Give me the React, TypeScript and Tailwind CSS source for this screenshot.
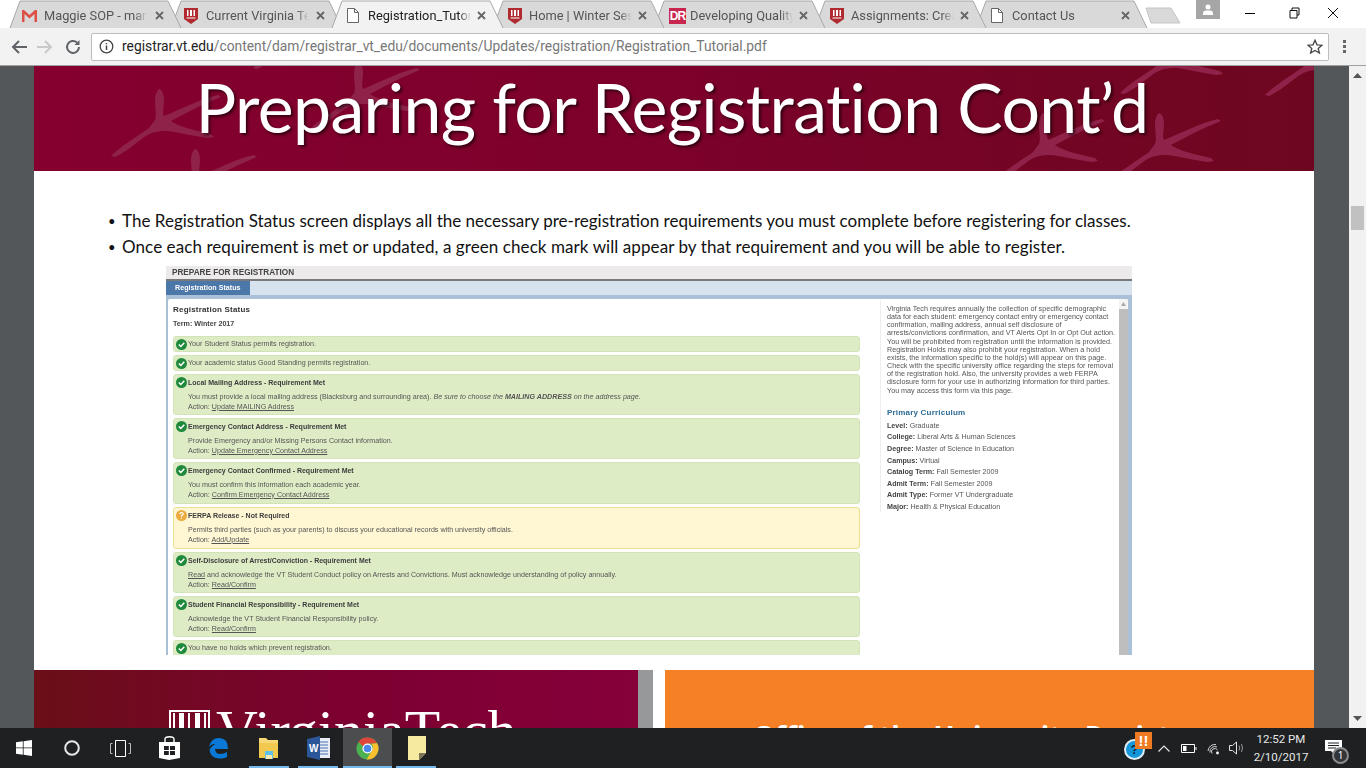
import React from "react";

const Shield = () => (
  <svg width="14" height="16" viewBox="0 0 14 16" className="shrink-0">
    <path d="M0 0H14V11L7 16L0 11Z" fill="#b02a2f" />
    <path d="M3 2V8H4.500V2ZM6 2V8H8V2ZM9.500 2V8H11V2ZM2.500 9.500H11.500V10.500H2.500Z" fill="#fff" />
  </svg>
);
const Doc = () => (
  <svg width="12" height="15" viewBox="0 0 12 15" className="shrink-0" fill="#fff" stroke="#666" strokeWidth="1">
    <path d="M.5.5H7.500L11.500 4.500V14.500H.5Z" />
    <path d="M7.500.5V4.500H11.500" fill="none" />
  </svg>
);
const Gmail = () => (
  <svg width="15" height="12" viewBox="0 0 15 12" className="shrink-0">
    <path d="M0 0H2L7.500 5L13 0H15V12H12.500V4L7.500 8.500L2.500 4V12H0Z" fill="#dd5044" />
  </svg>
);
const DR = () => (
  <div className="w-[17px] h-[16px] shrink-0 bg-[#c8254f] text-white text-[12px] font-bold leading-[16px] overflow-hidden text-center font-['Liberation_Sans',sans-serif] tracking-[-1px]">DR</div>
);

const tabs: { t: string; i: React.ReactNode; active?: boolean; gap: number; pl: number }[] = [
  { t: "Maggie SOP - marj", i: <Gmail />, gap: 7, pl: 13 },
  { t: "Current Virginia Tec", i: <Shield />, gap: 8, pl: 14 },
  { t: "Registration_Tutori", i: <Doc />, active: true, gap: 9, pl: 16 },
  { t: "Home | Winter Sess", i: <Shield />, gap: 7, pl: 16 },
  { t: "Developing Quality", i: <DR />, gap: 4, pl: 16 },
  { t: "Assignments: Creat", i: <Shield />, gap: 7, pl: 16 },
  { t: "Contact Us", i: <Doc />, gap: 9, pl: 16 },
];

function Tab({ t, i, active, gap, pl, z }: { t: string; i: React.ReactNode; active?: boolean; gap: number; pl: number; z: number }) {
  return (
    <div className="relative w-[173px] h-[28px] -mr-[12px] shrink-0" style={{ zIndex: z }}>
      <svg width="173" height="28" viewBox="0 0 173 28" className="absolute left-0 top-0">
        <path d="M1 28L11 1H159L172 28" fill={active ? "#f2f2f2" : "#d9d9d9"} stroke="#a8a8a8" strokeWidth="1" />
      </svg>
      <div className="relative flex items-center h-[28px] pr-[16px] pt-[3px]" style={{ paddingLeft: pl }}>
        {i}
        <span
          className={`w-[103px] overflow-hidden whitespace-nowrap text-[12.800px] font-['Roboto',sans-serif] ${active ? "text-[#222]" : "text-[#555]"}`}
          style={{ marginLeft: gap, maskImage: "linear-gradient(to right,#000 88%,transparent)" }}
        >
          {t}
        </span>
        <span className="ml-auto mr-[2px] text-[#666]">
          <svg width="9" height="9" viewBox="0 0 9 9"><path d="M1 1L8 8M8 1L1 8" stroke="#666" strokeWidth="1.800" /></svg>
        </span>
      </div>
    </div>
  );
}

function TopChrome() {
  return (
    <div className="shrink-0">
      <div className="h-[28px] bg-white flex relative pl-[9px]">
        {tabs.map((x, n) => (
          <Tab key={x.t} {...x} z={x.active ? 20 : 10 - n} />
        ))}
        <svg width="36" height="18" viewBox="0 0 36 18" className="mt-[7px] ml-[9px] shrink-0">
          <path d="M1 1H26L35 16H6Z" fill="#d9d9d9" stroke="#c4c4c4" />
        </svg>
        <div className="ml-[15px] w-[24px] h-[19px] bg-[#a6a6a6] flex items-center justify-center shrink-0">
          <svg width="10" height="11" viewBox="0 0 10 11"><circle cx="5" cy="3" r="2.500" fill="#fff" /><path d="M0 11V9Q0 7 3 6.500H7Q10 7 10 9V11Z" fill="#fff" /></svg>
        </div>
        <div className="w-[30px] h-[14px] ml-[15px] mt-[6px] flex items-center justify-center shrink-0">
          <div className="w-[10px] h-[1px] bg-black" />
        </div>
        <div className="w-[16px] ml-[24px] mt-[7px] shrink-0">
          <svg width="11" height="12" viewBox="0 0 11 12" fill="none" stroke="#111"><path d="M3 3V1H10V8H8" /><path d="M1 3.500H8V11H1Z" /></svg>
        </div>
        <div className="w-[16px] ml-[22px] mt-[7px] shrink-0">
          <svg width="12" height="12" viewBox="0 0 12 12"><path d="M1 1L11 11M11 1L1 11" stroke="#111" /></svg>
        </div>
      </div>
      <div className="h-[38px] bg-[#f2f2f2] border-b border-[#a0a0a0] flex items-center pl-[11px] pr-[8px]">
        <svg width="16" height="14" viewBox="0 0 16 14" fill="none" stroke="#5f6368" strokeWidth="2"><path d="M16 7H2M8 1L2 7L8 13" /></svg>
        <svg width="16" height="14" viewBox="0 0 16 14" fill="none" stroke="#c9c9c9" strokeWidth="2" className="ml-[10px]"><path d="M0 7H14M8 1L14 7L8 13" /></svg>
        <svg width="16" height="16" viewBox="0 0 16 16" fill="none" stroke="#5f6368" strokeWidth="2" className="ml-[12px]"><path d="M14 8A6 6 0 1 1 12 3.500" /><path d="M14.500 1V6H9.500Z" fill="#5f6368" stroke="none" /></svg>
        <div className="ml-[10px] w-[1238px] h-[28px] bg-white border border-[#bdbdbd] rounded-[2px] flex items-center pl-[7px] pr-[5px]">
          <svg width="15" height="15" viewBox="0 0 15 15" fill="none" stroke="#444" strokeWidth="1.300" className="shrink-0"><circle cx="7.500" cy="7.500" r="6.300" /><path d="M7.500 6.500V11M7.500 4V5.200" strokeWidth="1.500" /></svg>
          <span className="ml-[8px] text-[13.830px] font-['Roboto',sans-serif] whitespace-nowrap text-[#777]">
            <span className="text-[#222]">registrar.vt.edu</span>/content/dam/registrar_vt_edu/documents/Updates/registration/Registration_Tutorial.pdf
          </span>
          <svg width="16" height="15" viewBox="0 0 16 15" fill="none" stroke="#444" strokeWidth="1.300" className="ml-auto"><path d="M8 1.200L10 5.800L15 6.200L11.200 9.500L12.400 14L8 11.500L3.600 14L4.800 9.500L1 6.200L6 5.800Z" /></svg>
        </div>
        <div className="ml-[14px] flex flex-col gap-[2px]">
          <i className="block w-[3px] h-[3px] bg-[#666]" /><i className="block w-[3px] h-[3px] bg-[#666]" /><i className="block w-[3px] h-[3px] bg-[#666]" />
        </div>
      </div>
    </div>
  );
}

const Foot = ({ x, y }: { x: number; y: number }) => (
  <path
    transform={`translate(${x} ${y})`}
    fill="#8e2249"
    d="M-8 -4C-6 -10 -8 -14 -8 -24C-8 -30 -5 -35 -4 -35C-1 -35 1 -30 1 -24C1 -16 -1 -12 1 -8C20 -16 40 -26 55 -29L58 -27C40 -20 25 -12 8 -3C14 2 30 6 48 10L51 13L45 14C30 12 15 8 4 7C-6 7 -12 8 -20 14C-28 20 -40 30 -48 33L-52 32C-42 22 -25 12 -14 4Z"
  />
);

function Header() {
  return (
    <div className="relative h-[105px] overflow-hidden bg-gradient-to-r from-[#85002f] via-[#7c012b] to-[#6d071f] flex justify-center">
      <svg width="1280" height="105" viewBox="0 0 1280 105" className="absolute left-0 top-0">
        <Foot x={129} y={58} />
        <Foot x={271} y={-30} />
        <Foot x={328} y={31} />
        <Foot x={165} y={118} />
        <Foot x={1013} y={82} />
        <Foot x={1129} y={82} />
        <Foot x={1138} y={-5} />
        <Foot x={1283} y={-3} />
      </svg>
      <h1 className="relative mt-[1px] mr-[4px] text-white text-[68px] leading-[80px] tracking-[-0.64px] [font-variant-ligatures:none] font-normal font-['Lato',sans-serif] whitespace-nowrap [text-shadow:2px_2px_3px_rgba(0,0,0,0.6)]">
        Preparing for Registration Cont’d
      </h1>
    </div>
  );
}

const Check = () => (
  <svg width="11" height="11" viewBox="0 0 11 11" className="shrink-0">
    <circle cx="5.500" cy="5.500" r="5.500" fill="#1f8a3b" />
    <path d="M2.800 5.500L4.800 7.500L8.300 3.700" fill="none" stroke="#fff" strokeWidth="1.500" />
  </svg>
);
const Q = () => (
  <svg width="11" height="11" viewBox="0 0 11 11" className="shrink-0">
    <circle cx="5.500" cy="5.500" r="5.500" fill="#ecab3f" />
    <path d="M3.800 4.200Q4 2.700 5.500 2.700Q7.200 2.700 7.200 4.100Q7.200 5 5.500 5.800V6.700M5.500 7.700V8.700" fill="none" stroke="#fff" strokeWidth="1.200" />
  </svg>
);

function Simple({ text }: { text: string }) {
  return (
    <div className="h-[16px] bg-[#deecc6] border border-[#d3e3b8] rounded-[3px] flex items-center pl-[2px] gap-[1px] text-[#555]">
      <Check />
      <span>{text}</span>
    </div>
  );
}

function Block({ title, body, action, warn, h = 41 }: { title: string; body: React.ReactNode; action: string; warn?: boolean; h?: number }) {
  return (
    <div
      className={`border rounded-[3px] pl-[2px] pt-[2px] ${warn ? "bg-[#fff6d4] border-[#ecdf92]" : "bg-[#deecc6] border-[#d3e3b8]"}`}
      style={{ height: h }}
    >
      <div className="flex items-center gap-[1px] font-bold text-[7px] text-[#3c3c3c]">
        {warn ? <Q /> : <Check />}
        <span>{title}</span>
      </div>
      <div className="pl-[12px] mt-[3.500px] leading-[10px] text-[#555]">
        <div>{body}</div>
        <div>Action: <span className="underline">{action}</span></div>
      </div>
    </div>
  );
}

const curric: [string, string][] = [
  ["Level:", "Graduate"],
  ["College:", "Liberal Arts & Human Sciences"],
  ["Degree:", "Master of Science in Education"],
  ["Campus:", "Virtual"],
  ["Catalog Term:", "Fall Semester 2009"],
  ["Admit Term:", "Fall Semester 2009"],
  ["Admit Type:", "Former VT Undergraduate"],
  ["Major:", "Health & Physical Education"],
];

function RegShot() {
  return (
    <div className="mt-[6px] ml-[132px] w-[966px] h-[389px] overflow-hidden blur-[0.3px] font-['Liberation_Sans',sans-serif] text-[7.150px] leading-[9px] text-[#555]">
      <div className="h-[15px] bg-[#eceaea] border-b-2 border-[#77797c] pl-[6px] flex items-center text-[8.200px] font-bold text-[#444]">PREPARE FOR REGISTRATION</div>
      <div className="h-[14px] bg-[#d6e3ef] flex">
        <div className="w-[84px] bg-[#4c77a9] text-white font-bold pl-[9px] leading-[14px]">Registration Status</div>
      </div>
      <div className="h-[360px] bg-[#a9c0d6] pt-[4px] pl-[2px] pr-[4px] flex">
        <div className="flex-1 min-w-0 bg-white rounded-t-[2px] flex relative overflow-hidden">
          <div className="w-[697px] shrink-0 pl-[5px] pt-[6px]">
            <div className="text-[8px] font-bold text-[#333] tracking-[0.2px]">Registration Status</div>
            <div className="mt-[6px] font-bold text-[#444]">Term: Winter 2017</div>
            <div className="mt-[7px] w-[687px] flex flex-col gap-[3px]">
              <Simple text="Your Student Status permits registration." />
              <Simple text="Your academic status Good Standing permits registration." />
              <Block title="Local Mailing Address - Requirement Met" body={<>You must provide a local mailing address (Blacksburg and surrounding area). <i>Be sure to choose the <b>MAILING ADDRESS</b> on the address page.</i></>} action="Update MAILING Address" />
              <Block title="Emergency Contact Address - Requirement Met" body="Provide Emergency and/or Missing Persons Contact information." action="Update Emergency Contact Address" />
              <Block h={42} title="Emergency Contact Confirmed - Requirement Met" body="You must confirm this information each academic year." action="Confirm Emergency Contact Address" />
              <Block h={42} warn title="FERPA Release - Not Required" body="Permits third parties (such as your parents) to discuss your educational records with university officials." action="Add/Update" />
              <Block title="Self-Disclosure of Arrest/Conviction - Requirement Met" body={<><span className="underline">Read</span> and acknowledge the VT Student Conduct policy on Arrests and Convictions. Must acknowledge understanding of policy annually.</>} action="Read/Confirm" />
              <Block title="Student Financial Responsibility - Requirement Met" body="Acknowledge the VT Student Financial Responsibility policy." action="Read/Confirm" />
              <Simple text="You have no holds which prevent registration." />
            </div>
          </div>
          <div className="ml-[15px] w-[236px] h-[212px] mt-[1px] border-l border-[#eeeeee] pl-[6px] pt-[5px]">
            <p className="w-[229px] text-[7.200px] leading-[8.150px]">
              Virginia Tech requires annually the collection of specific demographic data for each student: emergency contact entry or emergency contact confirmation, mailing address, annual self disclosure of arrests/convictions confirmation, and VT Alerts Opt In or Opt Out action. You will be prohibited from registration until the information is provided. Registration Holds may also prohibit your registration. When a hold exists, the information specific to the hold(s) will appear on this page. Check with the specific university office regarding the steps for removal of the registration hold. Also, the university provides a web FERPA disclosure form for your use in authorizing information for third parties. You may access this form via this page.
            </p>
            <div className="mt-[13px] text-[8px] font-bold text-[#2c6a93] tracking-[0.2px]">Primary Curriculum</div>
            <div className="mt-[5px] flex flex-col gap-[2.600px]">
              {curric.map(([a, b]) => (
                <div key={a}><b className="text-[#444]">{a}</b> {b}</div>
              ))}
            </div>
          </div>
          <div className="absolute right-0 top-0 bottom-0 w-[9px] bg-[#f4f4f4] flex flex-col items-center">
            <svg width="5" height="4" viewBox="0 0 5 4" className="mt-[3px] mb-[3px]"><path d="M2.500 0L5 4H0Z" fill="#aaa" /></svg>
            <div className="w-full flex-1 bg-[#bebebe]" />
          </div>
        </div>
      </div>
    </div>
  );
}

function Footer() {
  return (
    <div className="h-[58px] overflow-hidden flex">
      <div className="w-[604px] bg-gradient-to-r from-[#6a0e17] via-[#7c0030] to-[#86003a] flex items-start pl-[135px] pt-[40px] gap-[6px]">
        <div className="w-[41px] h-[40px] shrink-0 border-2 border-white flex justify-around pt-[1px]">
          <i className="block w-[2px] bg-white" /><i className="block w-[5px] bg-white" /><i className="block w-[2px] bg-white" /><i className="block w-[5px] bg-white" /><i className="block w-[2px] bg-white" />
        </div>
        <span className="text-white font-['Liberation_Serif',serif] text-[58px] leading-[58px] whitespace-nowrap -mt-[8px]">VirginiaTech</span>
      </div>
      <div className="w-[15px] bg-[#96989a]" />
      <div className="w-[12px] bg-white" />
      <div className="w-[649px] bg-[#f58025] pl-[88px] pt-[46px]">
        <span className="block text-white font-bold font-['Open_Sans',sans-serif] text-[28px] leading-[40px] whitespace-nowrap">Office of the University Registrar</span>
      </div>
    </div>
  );
}

function PageScrollbar() {
  return (
    <div className="w-[17px] shrink-0 bg-[#f1f1f1] flex flex-col items-center relative">
      <svg width="9" height="5" viewBox="0 0 9 5" className="mt-[7px]"><path d="M4.500 0L9 5H0Z" fill="#555" /></svg>
      <div className="w-[13px] h-[24px] mt-[128px] bg-[#c1c1c1]" />
      <svg width="9" height="5" viewBox="0 0 9 5" className="mt-auto mb-[7px]"><path d="M0 0H9L4.500 5Z" fill="#555" /></svg>
    </div>
  );
}

function Viewport() {
  return (
    <div className="flex-1 min-h-0 flex">
      <div className="flex-1 bg-[#53575a] pl-[34px] overflow-hidden">
        <div className="w-[1280px] h-[662px] flex flex-col">
          <Header />
          <div className="h-[499px] bg-white">
            <ul className="pt-[37px] font-['Lato',sans-serif] text-[17.050px] leading-[26px] text-[#111]">
              <li className="flex pl-[74px] whitespace-nowrap">
                <span className="w-[14px] shrink-0 text-[13px]">•</span>
                <span>The Registration Status screen displays all the necessary pre-registration requirements you must complete before registering for classes.</span>
              </li>
              <li className="flex pl-[74px] whitespace-nowrap">
                <span className="w-[14px] shrink-0 text-[13px]">•</span>
                <span className="tracking-[0.065px]">Once each requirement is met or updated, a green check mark will appear by that requirement and you will be able to register.</span>
              </li>
            </ul>
            <RegShot />
          </div>
          <Footer />
        </div>
      </div>
      <PageScrollbar />
    </div>
  );
}

function Taskbar() {
  const items: { w: number; el: React.ReactNode; bar?: [number, number]; active?: boolean }[] = [
    { w: 48, el: <svg width="16" height="16" viewBox="0 0 16 16" fill="#fff"><path d="M0 2.300L6.800 1.300V7.500H0ZM7.600 1.200L16 0V7.500H7.600ZM0 8.300H6.800V14.700L0 13.700ZM7.600 8.300H16V16L7.600 14.800Z" /></svg> },
    { w: 48, el: <svg width="16" height="16" viewBox="0 0 16 16" fill="none" stroke="#e8e8e8" strokeWidth="2"><circle cx="8" cy="8" r="6.800" /></svg> },
    { w: 49, el: <svg width="21" height="17" viewBox="0 0 21 17" fill="none" stroke="#fff" strokeWidth="1"><path d="M5.500.5H15.500V16.500H5.500Z" /><path d="M2.500 3.500H.5V13.500H2.500M18.500 3.500H20.500V13.500H18.500" stroke="#bbb" /></svg> },
    { w: 49, el: <svg width="21" height="24" viewBox="0 0 21 24"><path d="M0 6H21V22L10 24L0 22Z" fill="#fff" /><path d="M6 7V3Q6 .8 10.500 .8Q15 .8 15 3V7" fill="none" stroke="#fff" strokeWidth="1.400" /><path d="M5 10H9.800V14H5ZM11 10H16V14H11ZM5 15H9.800V19H5ZM11 15H16V19H11Z" fill="#1f2124" /></svg> },
    { w: 49, el: <svg width="21" height="22" viewBox="0 0 21 22"><path d="M1 10Q3 1 11 1Q20 1 20 12H7Q7.500 17 12 17Q16 17 19 15V20Q15 22 11 21.500Q2 21 1.500 12.500Q5 6.500 11 6.500Q14 6.500 14.500 8.500Q11 7 8 8Q5 5.500 1 10Z" fill="#0a78d7" /></svg> },
    { w: 50, bar: [6, 4], el: <svg width="21" height="24" viewBox="0 0 21 24"><path d="M1 2H8L10 4H20V22H1Z" fill="#f6d776" /><path d="M1 7H20V22H15V15H7V22H1Z" fill="#f3c84e" /><path d="M7 15H15V23H7Z" fill="#5dc0ea" /><path d="M8 19H14V23H8Z" fill="#f6e8ae" /></svg> },
    { w: 50, bar: [5, 5], el: <svg width="23" height="24" viewBox="0 0 23 24"><path d="M8 2H23V22H8Z" fill="#e8edf5" /><path d="M10 6H21M10 9H21M10 12H21M10 15H21M10 18H21" stroke="#4a6fb0" /><path d="M0 3L13 0V24L0 21Z" fill="#2b579a" /><text x="2" y="16" fill="#fff" fontSize="10" fontWeight="700" fontFamily="Liberation Sans">W</text></svg> },
    { w: 49, bar: [0, 0], active: true, el: <svg width="23" height="23" viewBox="0 0 24 24"><circle cx="12" cy="12" r="11.500" fill="#4caf50" /><path d="M12 .5A11.500 11.500 0 0 1 22 6.500L12 7A5 5 0 0 0 7.500 10L2.500 5A11.500 11.500 0 0 1 12 .5Z" fill="#e0453a" /><path d="M22 6.500A11.500 11.500 0 0 1 11 23.500L16.500 14A5 5 0 0 0 16 7Z" fill="#fbc02d" /><circle cx="12" cy="12" r="5.300" fill="#fff" /><circle cx="12" cy="12" r="4" fill="#4a88ec" /></svg> },
    { w: 49, bar: [4, 5], el: <svg width="18" height="24" viewBox="0 0 18 24"><path d="M0 0H18V17L11 24H0Z" fill="#f5eaa0" /><path d="M11 24V17H18Z" fill="#7c7456" /></svg> },
  ];
  return (
    <div className="h-[40px] shrink-0 bg-[#1e2022] flex text-white relative z-30">
      {items.map((it, n) => (
        <div key={n} className={`h-[40px] flex items-center justify-center shrink-0 relative ${it.active ? "bg-[#4b4d4f]" : ""}`} style={{ width: it.w }}>
          {it.el}
          {it.bar && <i className="absolute bottom-0 h-[2px] bg-[#76b9ed]" style={{ left: it.bar[0], right: it.bar[1] }} />}
        </div>
      ))}
      <div className="ml-auto flex items-center">
        <div className="relative w-[30px] h-[40px] flex items-center mr-[4px]">
          <svg width="21" height="21" viewBox="0 0 21 21" className="mt-[2px]"><circle cx="10.500" cy="10.500" r="9.500" fill="#1496d8" stroke="#dfeef7" strokeWidth="2" /><text x="10.500" y="15" textAnchor="middle" fontSize="12" fontWeight="700" fontFamily="Liberation Sans" fill="#12243a">?</text></svg>
          <div className="absolute left-[11px] top-[4px] w-[17px] h-[17px] bg-[#ee7b22] text-white text-[15px] leading-[17px] font-bold text-center font-['Liberation_Sans',sans-serif]">!!</div>
        </div>
        <svg width="12" height="7" viewBox="0 0 12 7" fill="none" stroke="#e5e5e5" strokeWidth="1.200"><path d="M.5 6.500L6 1L11.500 6.500" /></svg>
        <svg width="16" height="9" viewBox="0 0 16 9" fill="none" stroke="#fff" className="ml-[11px]"><path d="M.5.5H13.500V8.500H.5Z" /><path d="M2 2H5.500V7H2Z" fill="#fff" stroke="none" /><path d="M15 3V6" /></svg>
        <svg width="13" height="13" viewBox="0 0 13 13" fill="none" stroke="#cfcfcf" className="ml-[10px]"><path d="M1 9A7 7 0 0 1 9 2.500M3 10.500A5 5 0 0 1 10 5M5 11.500A3 3 0 0 1 10.500 8" /><circle cx="10.500" cy="11" r="1.400" fill="#fff" stroke="none" /></svg>
        <svg width="16" height="14" viewBox="0 0 16 14" fill="none" stroke="#e5e5e5" className="ml-[9px]"><path d="M.5 4.500H3.500L7.500 1V13L3.500 9.500H.5Z" /><path d="M10 4.500Q11.500 7 10 9.500M12.500 3Q14.500 7 12.500 11" stroke="#999" /></svg>
        <div className="ml-[6px] w-[60px] text-center font-['Roboto',sans-serif] text-[11.500px] leading-[18px] text-[#e8e8e8]">
          <div>12:52 PM</div>
          <div>2/10/2017</div>
        </div>
        <div className="relative ml-[9px] w-[46px] h-[40px] flex items-center pl-[5px]">
          <svg width="17" height="15" viewBox="0 0 17 15" className="-mt-[2px]"><path d="M0 0H17V11H10V15L6 11H0Z" fill="#fff" /><path d="M3 3H14M3 5.500H14M3 8H11" stroke="#1e2022" /></svg>
          <div className="absolute left-[12px] top-[19px] w-[17px] h-[17px] rounded-full bg-[#333638] border-2 border-[#8b8d8f] text-white text-[10px] leading-[13px] text-center font-['Noto_Sans',sans-serif]">1</div>
        </div>
      </div>
    </div>
  );
}

export default function App() {
  return (
    <div className="w-[1366px] h-[768px] overflow-hidden flex flex-col bg-white">
      <TopChrome />
      <Viewport />
      <Taskbar />
    </div>
  );
}
